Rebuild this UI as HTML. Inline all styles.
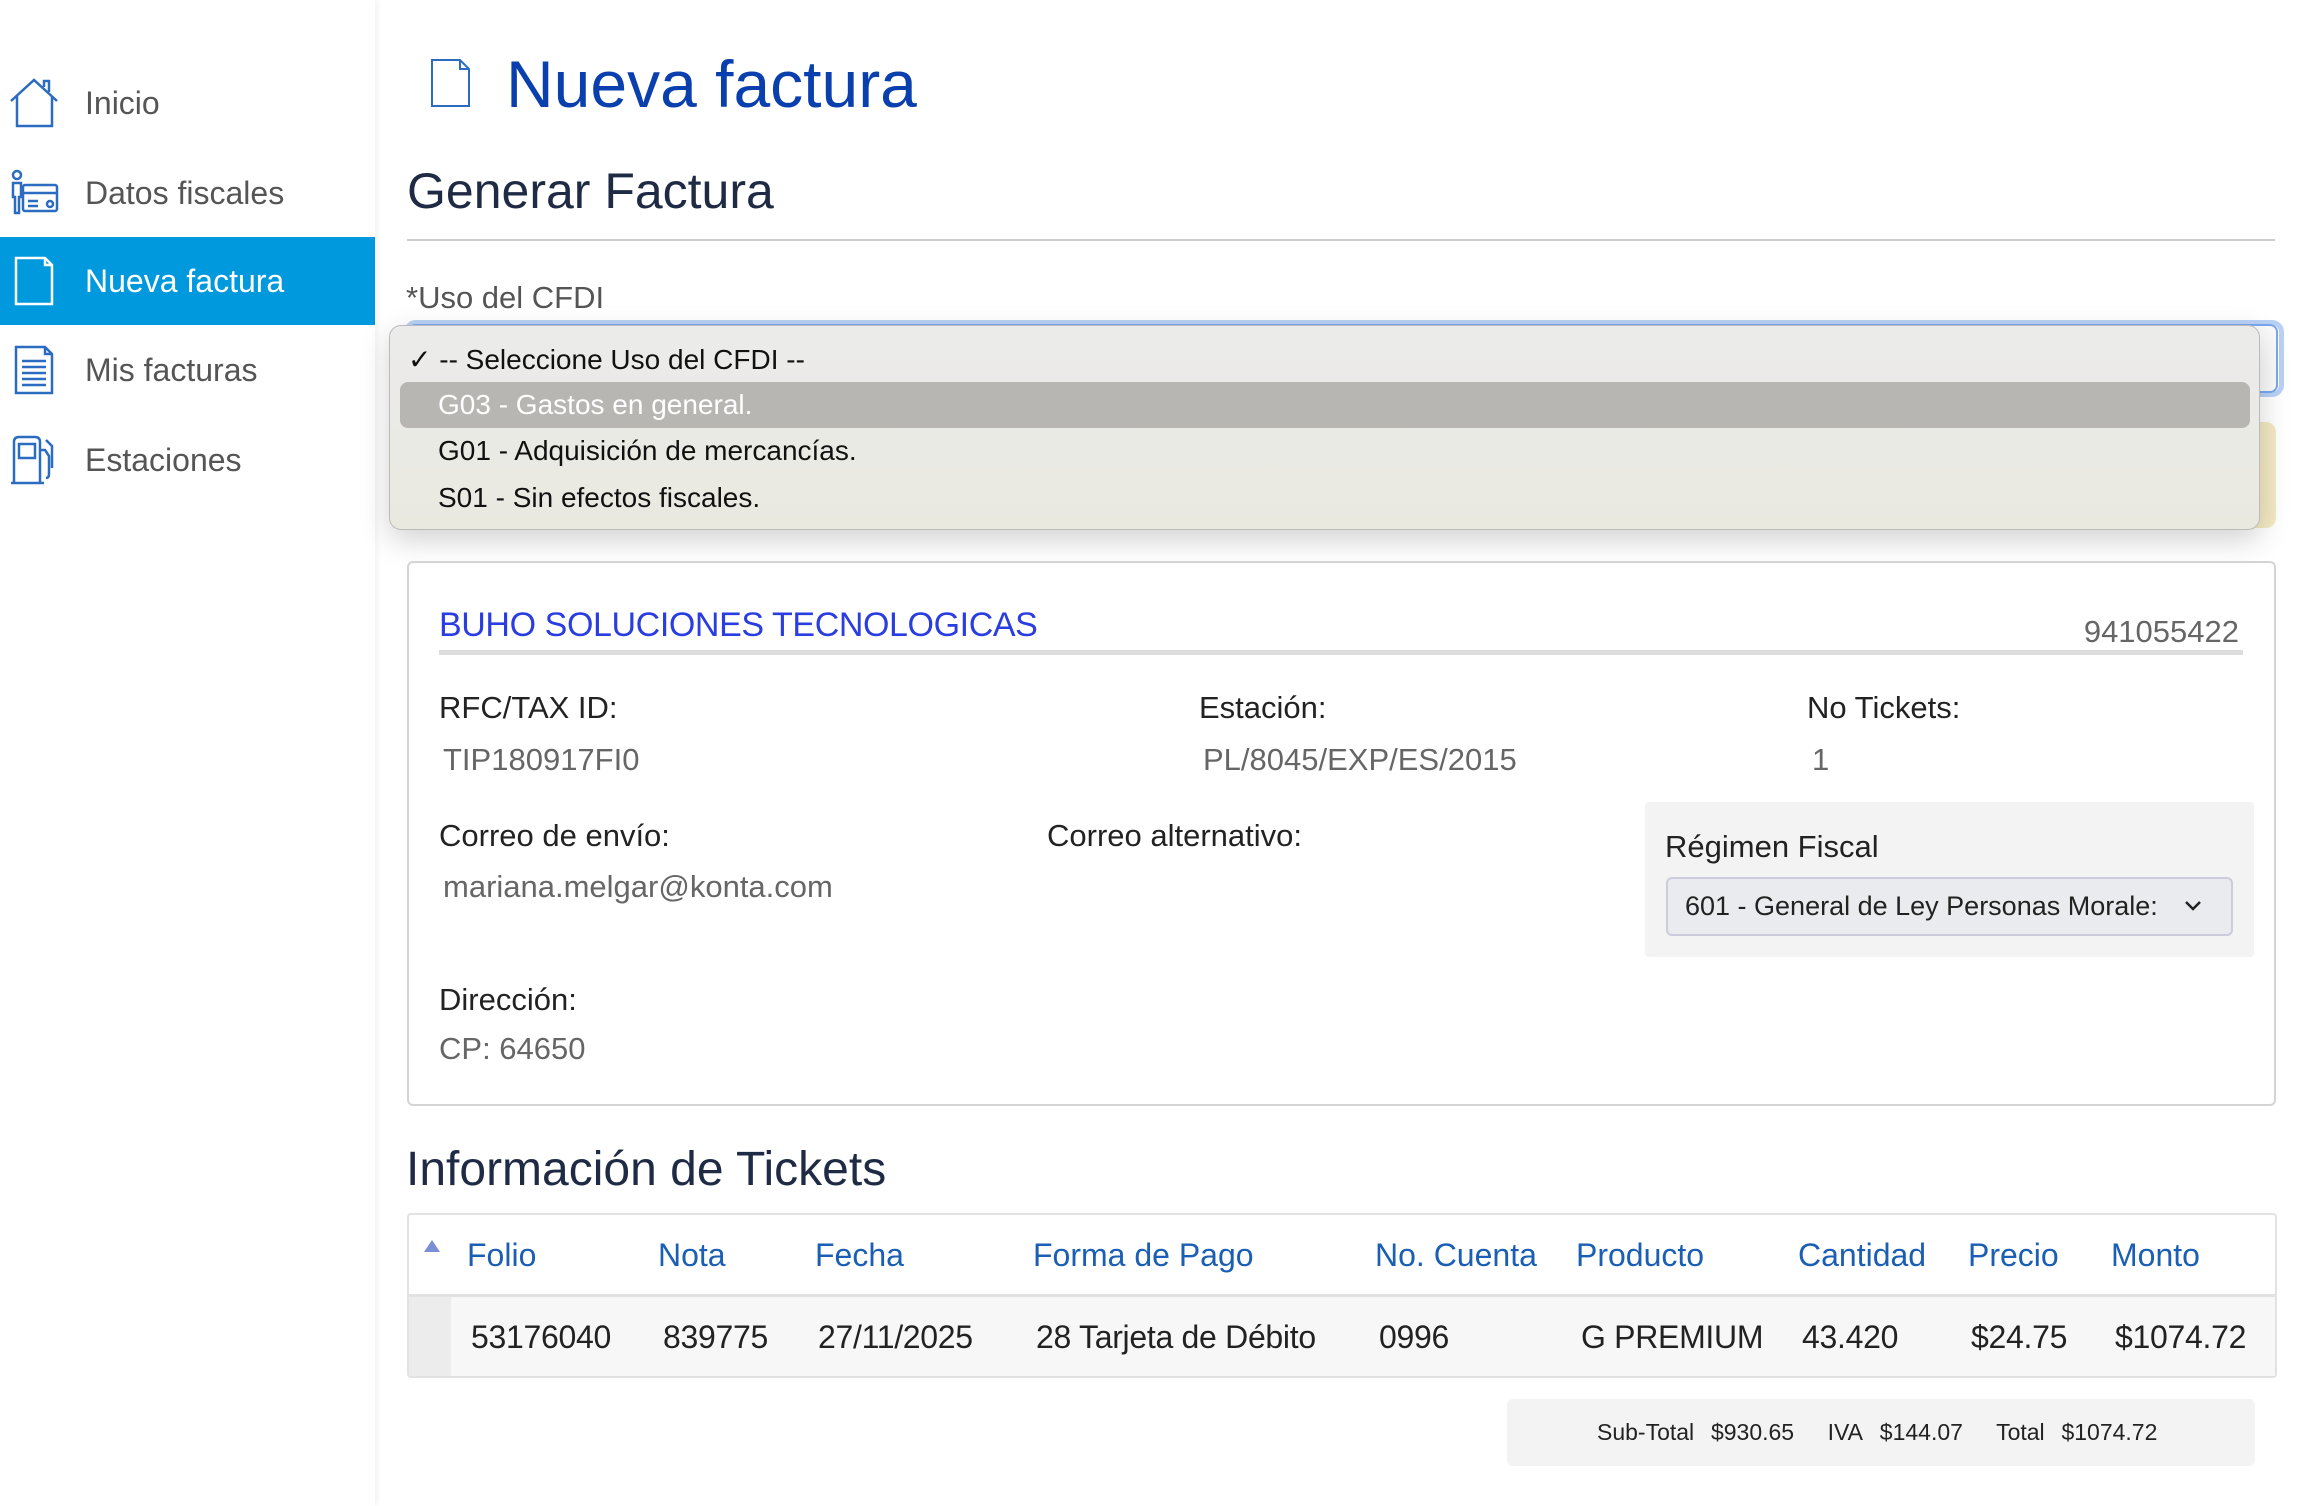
<!DOCTYPE html>
<html><head><meta charset="utf-8">
<style>
*{margin:0;padding:0;box-sizing:border-box}
html,body{width:2304px;height:1506px;overflow:hidden;background:#fff;font-family:"Liberation Sans",sans-serif}
.a{position:absolute;white-space:nowrap}
.side{position:absolute;left:0;top:0;width:375px;height:1506px;background:#fff;box-shadow:2px 0 6px rgba(0,0,0,.06)}
.nav{position:absolute;left:0;width:375px;height:88px;font-size:32px;color:#555;line-height:88px;padding-left:85px}
.nav svg{position:absolute;left:8px;top:18px}
.lbl{font-size:31px;color:#222}
.val{font-size:31px;color:#666}
</style></head><body>
<div class="side">
 <div class="nav" style="top:59px">
  <svg width="52" height="52" viewBox="0 0 52 52" fill="none" stroke="#2b6cc0" stroke-width="2.5"><path d="M3 24 L26 3 L49 24 M9 19 V49 H44 V19 M36 10 V4 H41 V15"/></svg>Inicio</div>
 <div class="nav" style="top:149px">
  <svg width="52" height="52" viewBox="0 0 52 52" fill="none" stroke="#2b6cc0" stroke-width="2.5"><circle cx="9" cy="8" r="4"/><path d="M5 16 H13 V30 H11 V46 H7 V30 H5 Z"/><rect x="15" y="18" width="34" height="26" rx="2"/><path d="M15 26 H49 M20 34 H30 M20 39 H30"/><circle cx="42" cy="37" r="3"/></svg>Datos fiscales</div>
 <div class="nav" style="top:237px;background:#0099dd;color:#fff">
  <svg width="52" height="52" viewBox="0 0 52 52" fill="none" stroke="#fff" stroke-width="2.5"><path d="M8 3 H37 L44 10 V49 H8 Z M37 3 V10 H44"/></svg>Nueva factura</div>
 <div class="nav" style="top:326px">
  <svg width="52" height="52" viewBox="0 0 52 52" fill="none" stroke="#2b6cc0" stroke-width="2.5"><path d="M8 3 H37 L44 10 V49 H8 Z M37 3 V10 H44 M14 17 H38 M14 23 H38 M14 29 H38 M14 35 H38 M14 41 H38"/></svg>Mis facturas</div>
 <div class="nav" style="top:416px">
  <svg width="52" height="52" viewBox="0 0 52 52" fill="none" stroke="#2b6cc0" stroke-width="2.5"><path d="M6 49 V8 Q6 3 11 3 H27 Q32 3 32 8 V49 M3 49 H36 M11 10 H27 V24 H11 Z M32 16 H37 L41 22 V40 Q41 44 38 44 M38 6 L44 12 V34"/></svg>Estaciones</div>
</div>

<svg class="a" style="left:430px;top:58px" width="42" height="50" viewBox="0 0 42 50" fill="none" stroke="#2b6cc0" stroke-width="2"><path d="M2 2 H30 L39 11 V48 H2 Z M30 2 V11 H39"/></svg>
<div class="a" style="left:506px;top:44px;font-size:66px;color:#0a3fae;line-height:80px">Nueva factura</div>
<div class="a" style="left:407px;top:161px;font-size:50px;color:#1f2a44;line-height:60px">Generar Factura</div>
<div class="a" style="left:407px;top:239px;width:1868px;height:2px;background:#ccc"></div>
<div class="a" style="left:406px;top:280px;font-size:31px;color:#555;line-height:36px">*Uso del CFDI</div>

<div class="a" style="left:404px;top:320px;width:1880px;height:77px;border:5px solid #b9d1f5;border-radius:12px"></div>
<div class="a" style="left:408px;top:324px;width:1870px;height:69px;border:2px solid #7aa7ee;border-radius:8px;background:#fafafa"></div>
<div class="a" style="left:407px;top:422px;width:1869px;height:106px;background:#f3e9c3;border-radius:10px"></div>

<div class="a" style="left:389px;top:325px;width:1871px;height:205px;border-radius:12px;background:linear-gradient(#ebebeb,#eae9e0);border:1px solid #bbb;box-shadow:0 10px 30px rgba(0,0,0,.18)"></div>
<div class="a" style="left:400px;top:382px;width:1850px;height:46px;background:#b7b6b2;border-radius:8px"></div>
<div class="a" style="left:408px;top:342px;font-size:28px;color:#111;line-height:36px">✓ -- Seleccione Uso del CFDI --</div>
<div class="a" style="left:438px;top:387px;font-size:28px;color:#fff;line-height:36px">G03 - Gastos en general.</div>
<div class="a" style="left:438px;top:433px;font-size:28px;color:#111;line-height:36px">G01 - Adquisición de mercancías.</div>
<div class="a" style="left:438px;top:480px;font-size:28px;color:#111;line-height:36px">S01 - Sin efectos fiscales.</div>

<div class="a" style="left:407px;top:561px;width:1869px;height:545px;border:2px solid #d4d4d4;border-radius:6px"></div>
<div class="a" style="left:439px;top:604px;font-size:34px;letter-spacing:-0.4px;color:#2a3de0;line-height:42px">BUHO SOLUCIONES TECNOLOGICAS</div>
<div class="a" style="left:2076px;top:613px;width:163px;text-align:right;font-size:31px;color:#666;line-height:38px">941055422</div>
<div class="a" style="left:439px;top:650px;width:1804px;height:5px;background:#ddd"></div>
<div class="a lbl" style="left:439px;top:690px">RFC/TAX ID:</div>
<div class="a val" style="left:443px;top:742px">TIP180917FI0</div>
<div class="a lbl" style="left:1199px;top:690px">Estación:</div>
<div class="a val" style="left:1203px;top:742px">PL/8045/EXP/ES/2015</div>
<div class="a lbl" style="left:1807px;top:690px">No Tickets:</div>
<div class="a val" style="left:1812px;top:742px">1</div>
<div class="a lbl" style="left:439px;top:818px">Correo de envío:</div>
<div class="a val" style="left:443px;top:869px">mariana.melgar@konta.com</div>
<div class="a lbl" style="left:1047px;top:818px">Correo alternativo:</div>
<div class="a" style="left:1645px;top:802px;width:609px;height:155px;background:#f3f3f3;border-radius:4px"></div>
<div class="a lbl" style="left:1665px;top:829px">Régimen Fiscal</div>
<div class="a" style="left:1666px;top:877px;width:567px;height:59px;background:#e9ebee;border:2px solid #ccd;border-radius:6px;font-size:27px;color:#222;line-height:55px;padding-left:17px;overflow:hidden">601 - General de Ley Personas Morale:</div>
<svg class="a" style="left:2183px;top:896px" width="20" height="20" viewBox="0 0 20 20" fill="none" stroke="#222" stroke-width="2.5"><path d="M3 6 L10 13 L17 6"/></svg>
<div class="a lbl" style="left:439px;top:982px">Dirección:</div>
<div class="a val" style="left:439px;top:1031px">CP: 64650</div>

<div class="a" style="left:406px;top:1141px;font-size:48px;color:#1f2a44;line-height:58px">Información de Tickets</div>
<div class="a" style="left:407px;top:1213px;width:1870px;height:165px;border:2px solid #e2e2e2;border-radius:4px"></div>
<div class="a" style="left:409px;top:1294px;width:1866px;height:3px;background:#e2e2e2"></div>
<div class="a" style="left:409px;top:1297px;width:1866px;height:79px;background:#f7f7f7"></div>
<div class="a" style="left:409px;top:1297px;width:42px;height:79px;background:#ececec"></div>
<div class="a" style="left:424px;top:1240px;width:0;height:0;border-left:8px solid transparent;border-right:8px solid transparent;border-bottom:12px solid #7a8fd8"></div>
<div style="position:absolute;top:1236px;left:0;font-size:32px;color:#1a5fb4;line-height:38px">
<span class="a" style="left:467px">Folio</span><span class="a" style="left:658px">Nota</span><span class="a" style="left:815px">Fecha</span><span class="a" style="left:1033px">Forma de Pago</span><span class="a" style="left:1375px">No. Cuenta</span><span class="a" style="left:1576px">Producto</span><span class="a" style="left:1798px">Cantidad</span><span class="a" style="left:1968px">Precio</span><span class="a" style="left:2111px">Monto</span></div>
<div style="position:absolute;top:1318px;left:0;font-size:32px;color:#222;line-height:38px;letter-spacing:-0.3px">
<span class="a" style="left:471px">53176040</span><span class="a" style="left:663px">839775</span><span class="a" style="left:818px">27/11/2025</span><span class="a" style="left:1036px">28 Tarjeta de Débito</span><span class="a" style="left:1379px">0996</span><span class="a" style="left:1581px">G PREMIUM</span><span class="a" style="left:1802px">43.420</span><span class="a" style="left:1971px">$24.75</span><span class="a" style="left:2115px">$1074.72</span></div>

<div class="a" style="left:1507px;top:1399px;width:748px;height:67px;background:#f3f3f3;border-radius:6px"></div>
<div class="a" style="left:1597px;top:1418px;font-size:23px;color:#222;line-height:28px;word-spacing:2px">Sub-Total&nbsp; $930.65 &nbsp;&nbsp; IVA&nbsp; $144.07 &nbsp;&nbsp; Total&nbsp; $1074.72</div>
</body></html>
